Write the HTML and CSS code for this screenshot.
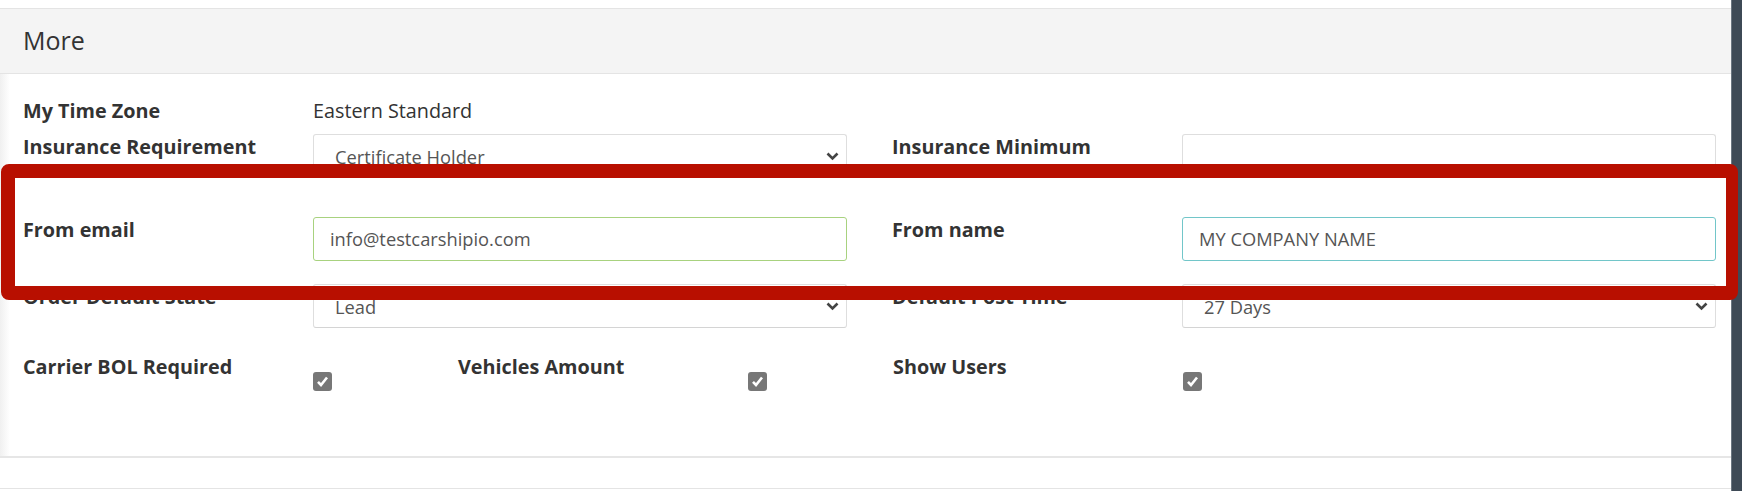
FILE: index.html
```html
<!DOCTYPE html>
<html lang="en">
<head>
  <meta charset="UTF-8">
  <meta name="viewport" content="width=device-width, initial-scale=1.0">
  <title>Company Settings</title>
  <link rel="stylesheet" href="styles.css">
</head>
<body>

<div class="page">
  <div class="content">
    <div class="panel">
      <div class="panel-heading">More</div>
      <div class="panel-body">

        <div class="form-row row-static">
          <div class="field-pair">
            <label class="field-label">My Time Zone</label>
            <div class="static-value">Eastern Standard</div>
          </div>
        </div>

        <div class="form-row row-insurance">
          <div class="field-pair">
            <label class="field-label" for="insReq">Insurance Requirement</label>
            <div class="select-wrap">
              <select id="insReq" class="form-control">
                <option>Certificate Holder</option>
              </select>
              <svg class="chevron" width="13" height="9" viewBox="0 0 13 9"><path d="M1.5 1.5 L6.5 6.5 L11.5 1.5" fill="none" stroke="#444" stroke-width="2.6"/></svg>
            </div>
          </div>
          <div class="field-pair">
            <label class="field-label" for="insMin">Insurance Minimum</label>
            <input type="text" id="insMin" class="form-control">
          </div>
        </div>

        <div class="form-row row-from">
          <div class="field-pair">
            <label class="field-label" for="fromEmail">From email</label>
            <input type="email" id="fromEmail" class="form-control input-valid" value="info@testcarshipio.com">
          </div>
          <div class="field-pair">
            <label class="field-label" for="fromName">From name</label>
            <input type="text" id="fromName" class="form-control input-focus" value="MY COMPANY NAME">
          </div>
        </div>

        <div class="form-row row-order">
          <div class="field-pair">
            <label class="field-label" for="orderState">Order Default State</label>
            <div class="select-wrap">
              <select id="orderState" class="form-control">
                <option>Lead</option>
              </select>
              <svg class="chevron" width="13" height="9" viewBox="0 0 13 9"><path d="M1.5 1.5 L6.5 6.5 L11.5 1.5" fill="none" stroke="#444" stroke-width="2.6"/></svg>
            </div>
          </div>
          <div class="field-pair">
            <label class="field-label" for="postTime">Default Post Time</label>
            <div class="select-wrap">
              <select id="postTime" class="form-control">
                <option>27 Days</option>
              </select>
              <svg class="chevron" width="13" height="9" viewBox="0 0 13 9"><path d="M1.5 1.5 L6.5 6.5 L11.5 1.5" fill="none" stroke="#444" stroke-width="2.6"/></svg>
            </div>
          </div>
        </div>

        <div class="form-row row-checks">
          <div class="check-pair">
            <label class="field-label">Carrier BOL Required</label>
            <span class="check-box"><svg width="19" height="19" viewBox="0 0 19 19"><path d="M5 9.8 L8 13 L14 5.5" fill="none" stroke="#fff" stroke-width="2.6"/></svg></span>
          </div>
          <div class="check-pair">
            <label class="field-label">Vehicles Amount</label>
            <span class="check-box"><svg width="19" height="19" viewBox="0 0 19 19"><path d="M5 9.8 L8 13 L14 5.5" fill="none" stroke="#fff" stroke-width="2.6"/></svg></span>
          </div>
          <div class="check-pair">
            <label class="field-label">Show Users</label>
            <span class="check-box"><svg width="19" height="19" viewBox="0 0 19 19"><path d="M5 9.8 L8 13 L14 5.5" fill="none" stroke="#fff" stroke-width="2.6"/></svg></span>
          </div>
        </div>

      </div>
    </div>
    <div class="panel panel-next"></div>
  </div>
  <div class="side-strip"></div>

  <!-- annotation box drawn over the "From" row -->
  <div class="highlight-box"></div>
</div>

</body>
</html>
```

FILE: styles.css
```css
  body {
    margin: 0;
    padding: 0;
    font-family: "Open Sans", Arial, sans-serif;
    color: #333;
    background-color: #ffffff;
  }

  .page {
    position: relative;
    display: flex;
    height: 491px;
    overflow: hidden;
  }

  .content {
    width: 1732px;
    padding-top: 8px;
  }

  .side-strip {
    width: 10px;
    background-color: #3e4a56;
    border-left: 1px solid #6b7681;
  }

  .panel {
    border-top: 1px solid #e4e4e4;
    border-bottom: 2px solid #e6e6e6;
    background-color: #fff;
  }

  .panel-heading {
    height: 64px;
    line-height: 62px;
    padding-left: 23px;
    background-color: #f4f4f4;
    border-bottom: 1px solid #e4e4e4;
    font-size: 25px;
    font-weight: 400;
    color: #333;
  }

  .panel-body {
    box-sizing: border-box;
    height: 382px;
    padding: 24px 15px 0 23px;
    background: linear-gradient(to right, #f0f0f0, #ffffff 10px);
  }

  .panel-next {
    margin-top: 30px;
    border-bottom: none;
    height: 10px;
  }

  .form-row {
    display: flex;
    gap: 45px;
  }

  .row-insurance {
    margin-top: 10px;
  }

  .row-from {
    margin-top: 39px;
  }

  .row-order {
    margin-top: 23px;
  }

  .row-checks {
    margin-top: 26px;
    gap: 0;
  }

  .field-pair {
    display: flex;
    width: 824px;
  }

  .field-label {
    display: block;
    width: 290px;
    flex-shrink: 0;
    font-size: 19.8px;
    font-weight: 700;
    line-height: 26px;
    color: #333;
  }

  .static-value {
    font-size: 19.8px;
    line-height: 26px;
    color: #333;
  }

  .form-control {
    box-sizing: border-box;
    width: 534px;
    height: 44px;
    padding: 0 16px 2px;
    border: 1px solid #dedede;
    border-bottom-color: #d4d4d4;
    border-radius: 3px;
    background-color: #fff;
    font-family: "Open Sans", Arial, sans-serif;
    font-size: 18.3px;
    color: #555;
    outline: none;
  }

  select.form-control {
    appearance: none;
    -webkit-appearance: none;
    padding: 0 16px 0 21px;
  }

  .input-valid {
    border-color: #a8d27f;
  }

  .input-focus {
    border-color: #72c6c9;
  }

  .select-wrap {
    position: relative;
    width: 534px;
  }

  .chevron {
    position: absolute;
    right: 8px;
    top: 18px;
  }

  .check-pair {
    display: flex;
    width: 435px;
  }

  .check-box {
    display: block;
    width: 19px;
    height: 19px;
    margin-top: 18px;
    border-radius: 3px;
    background-color: #777;
  }

  .check-box svg {
    display: block;
  }

  .highlight-box {
    position: absolute;
    left: 1px;
    top: 164px;
    width: 1737px;
    height: 136px;
    box-sizing: border-box;
    border: 14px solid #b80f00;
    border-right-width: 12px;
    border-radius: 8px;
  }
```
